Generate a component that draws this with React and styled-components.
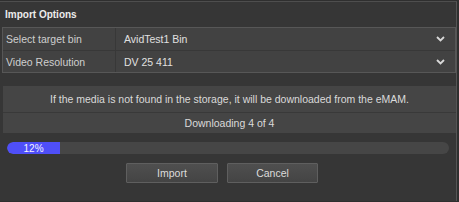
import React from "react";
import styled, { createGlobalStyle } from "styled-components";

const GlobalStyle = createGlobalStyle`
  html, body {
    margin: 0;
    padding: 0;
    background: #2f2f2f;
  }
  body {
    font-family: "Liberation Sans", Arial, sans-serif;
    overflow: hidden;
  }
`;

const TopStrip = styled.div`
  height: 1px;
  overflow: hidden;
  display: flex;
  justify-content: flex-end;
  padding-right: 30px;
`;

const TopStripText = styled.span`
  font-size: 10px;
  line-height: 10px;
  margin-top: -8px;
  color: #8a8a8a;
  letter-spacing: 0.5px;
`;

const Dialog = styled.div`
  width: 457px;
  height: 200px;
  background: #363636;
  border-top: 1px solid #4e4e4e;
  border-right: 1px solid #555;
  box-sizing: border-box;
  display: flex;
  flex-direction: column;
`;

const Title = styled.h2`
  margin: 0;
  height: 25px;
  padding: 0 0 0 5px;
  display: flex;
  align-items: center;
  font-size: 10px;
  font-weight: bold;
  color: #ececec;
`;

const Table = styled.div`
  margin: 0 0 0 2px;
  width: 454px;
  border: 1px solid #575757;
  box-sizing: border-box;
  display: flex;
  flex-direction: column;
`;

const Row = styled.div`
  display: grid;
  grid-template-columns: 113px 1fr;
  height: 22px;
  background: #424242;
  border-top: ${p => (p.first ? "none" : "1px solid #383838")};
  box-sizing: border-box;
`;

const Label = styled.div`
  display: flex;
  align-items: center;
  padding-left: 3px;
  font-size: 10.5px;
  color: #cfcfcf;
  border-right: 1px solid #383838;
`;

const Select = styled.div`
  display: flex;
  align-items: center;
  justify-content: space-between;
  padding: 0 10px 0 8px;
  font-size: 10.5px;
  color: #e0e0e0;
`;

const Chevron = () => (
  <svg width="9" height="6" viewBox="0 0 9 6">
    <path d="M1 1 L4.5 4.5 L8 1" fill="none" stroke="#d8d8d8" strokeWidth="1.8" />
  </svg>
);

const Messages = styled.div`
  margin: 13px 0 0 3px;
  width: 453px;
  display: flex;
  flex-direction: column;
`;

const Message = styled.div`
  height: ${p => p.h}px;
  background: #454545;
  border-top: ${p => (p.divided ? "1px solid #393939" : "none")};
  display: flex;
  align-items: center;
  justify-content: center;
  font-size: 10.5px;
  color: #dadada;
  box-sizing: border-box;
`;

const Track = styled.div`
  margin: 9px 0 0 7px;
  width: 442px;
  height: 12px;
  border-radius: 6px;
  background: #464646;
  overflow: hidden;
  display: flex;
`;

const Fill = styled.div`
  height: 100%;
  background: #4f4ff8;
  border-radius: 6px 0 0 6px;
  display: flex;
  align-items: center;
  justify-content: center;
  font-size: 10px;
  color: #f4f4ff;
`;

const Buttons = styled.div`
  margin-top: 9px;
  padding-left: 126px;
  display: flex;
  gap: 9px;
`;

const Button = styled.button`
  width: ${p => p.w}px;
  height: 20px;
  padding: 0;
  background: linear-gradient(#4f4f4f, #444444);
  border: 1px solid #5f5f5f;
  border-radius: 1px;
  color: #dcdcdc;
  font-family: "Liberation Sans", Arial, sans-serif;
  font-size: 10.5px;
  cursor: pointer;
`;

export default function App() {
  const progress = 12;
  return (
    <>
      <GlobalStyle />
      <TopStrip>
        <TopStripText>07-03-2020 03:07 PM</TopStripText>
      </TopStrip>
      <Dialog>
        <Title>Import Options</Title>
        <Table>
          <Row first>
            <Label>Select target bin</Label>
            <Select>
              AvidTest1 Bin
              <Chevron />
            </Select>
          </Row>
          <Row>
            <Label>Video Resolution</Label>
            <Select>
              DV 25 411
              <Chevron />
            </Select>
          </Row>
        </Table>
        <Messages>
          <Message h={26}>
            If the media is not found in the storage, it will be downloaded from the eMAM.
          </Message>
          <Message h={21} divided>
            Downloading 4 of 4
          </Message>
        </Messages>
        <Track>
          <Fill style={{ width: `${progress}%` }}>{progress}%</Fill>
        </Track>
        <Buttons>
          <Button w={92}>Import</Button>
          <Button w={91}>Cancel</Button>
        </Buttons>
      </Dialog>
    </>
  );
}
